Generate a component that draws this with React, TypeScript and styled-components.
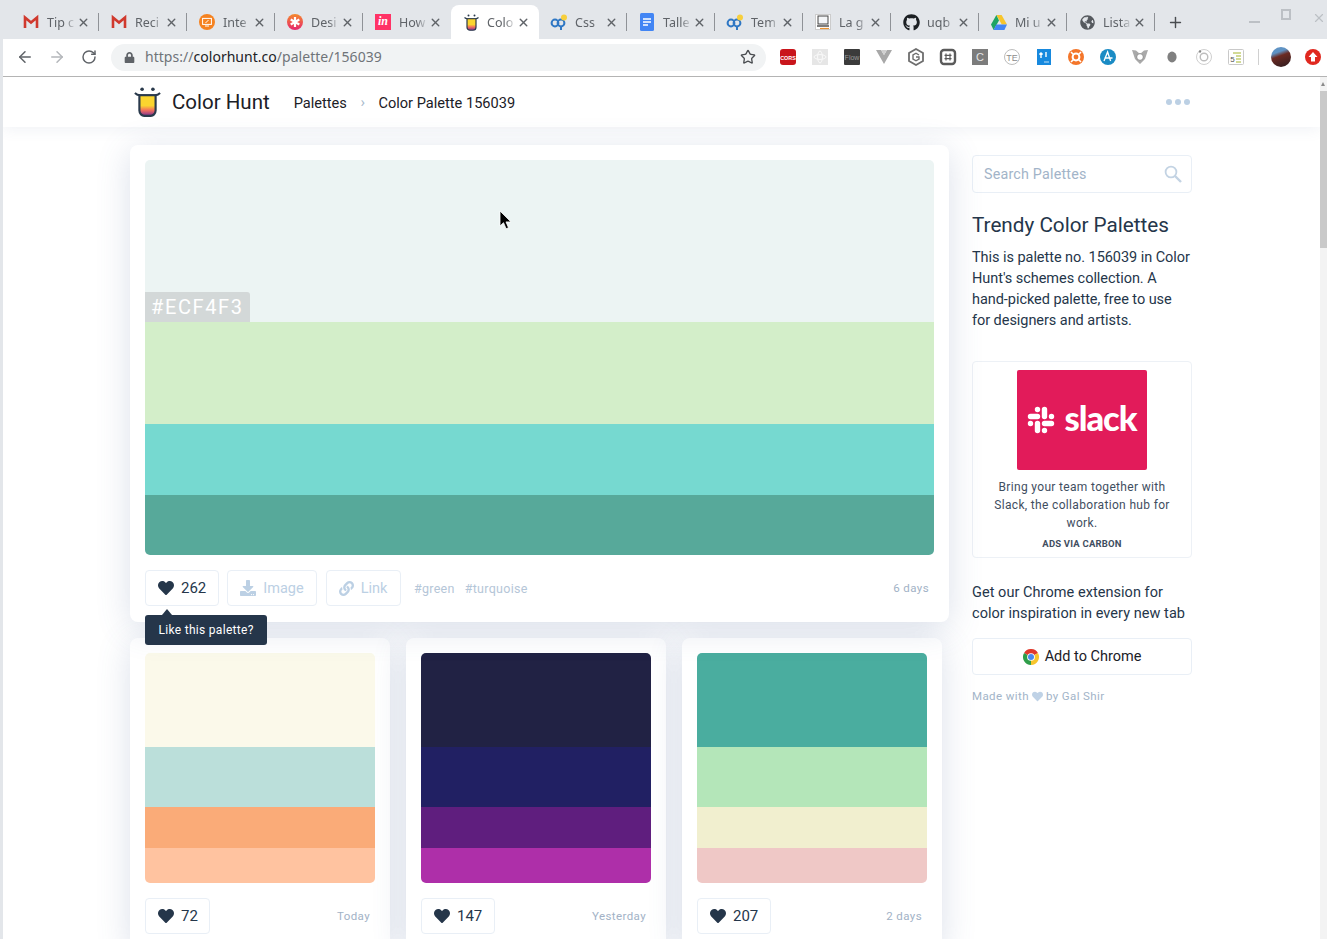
import * as React from 'react'
import styled, { createGlobalStyle } from 'styled-components'
import { ArrowLeft, ArrowRight, Plus, RotateCw, Star, X } from 'lucide-react'
import { FaDownload, FaGithub, FaGlobeAmericas, FaHeart, FaLink, FaLock } from 'react-icons/fa'

const Global = createGlobalStyle`
  html, body { margin: 0; padding: 0; height: 939px; overflow: hidden; background: #fff; }
  * { box-sizing: border-box; }
`

const uiFont = `Roboto, "Liberation Sans", sans-serif`
const chromeFont = `"Noto Sans", "Open Sans", sans-serif`

const InVision = styled.span`
  width: 16px;
  height: 16px;
  background: #ff3366;
  color: #fff;
  font: italic 700 12px/15px "Liberation Serif", serif;
  text-align: center;
`

const Logo = ({ width = 27, height = 30 }: { width?: number; height?: number }) => (
  <svg width={width} height={height} viewBox="0 0 30 33">
    <defs>
      <linearGradient id={`cup${width}`} x1="0" y1="0" x2="0" y2="1">
        <stop offset="0.5" stopColor="#fbd52f" />
        <stop offset="0.72" stopColor="#f4705c" />
        <stop offset="1" stopColor="#7c2e92" />
      </linearGradient>
    </defs>
    <circle cx="9" cy="2.4" r="2" fill="#2a3a4c" />
    <circle cx="21" cy="2.4" r="2" fill="#2a3a4c" />
    <path d="M1 6.5c2 2 4 2.5 6 2.5h16c2 0 4-.5 6-2.5" fill="none" stroke="#2a3a4c" strokeWidth="2.2" />
    <path d="M6 9h18v17a6 6 0 0 1-6 6h-6a6 6 0 0 1-6-6z" fill={`url(#cup${width})`} stroke="#2a3a4c" strokeWidth="2.4" />
  </svg>
)

const Gmail = () => (
  <svg width="16" height="16" viewBox="0 0 16 16">
    <path d="M2 14V3.5l6 5 6-5V14" fill="none" stroke="#d0392e" strokeWidth="2.6" />
  </svg>
)

const Pretzel = () => (
  <svg width="18" height="16" viewBox="0 0 18 16">
    <circle cx="5" cy="9" r="3.4" fill="none" stroke="#2f77c4" strokeWidth="2" />
    <circle cx="11" cy="9" r="3.4" fill="none" stroke="#2f77c4" strokeWidth="2" />
    <path d="M11 12v4" stroke="#2f77c4" strokeWidth="2" />
    <circle cx="14" cy="3.5" r="3" fill="#f7cf3c" />
  </svg>
)

const tabIcons: Record<string, React.ReactNode> = {
  gmail: <Gmail />,
  pretzel: <Pretzel />,
  logo: <Logo width={15} height={17} />,
  orange: (
    <svg width="16" height="16" viewBox="0 0 16 16">
      <circle cx="8" cy="8" r="8" fill="#f58220" />
      <rect x="3.6" y="4.4" width="8.8" height="6" fill="none" stroke="#fff" strokeWidth="1" />
      <path d="M6 12h4M6.5 9l3-3" stroke="#fff" strokeWidth="1" />
    </svg>
  ),
  asterisk: (
    <svg width="16" height="16" viewBox="0 0 16 16">
      <defs>
        <linearGradient id="desi" x1="0" y1="0" x2="0" y2="1">
          <stop offset="0" stopColor="#f58a2c" />
          <stop offset="1" stopColor="#e6266e" />
        </linearGradient>
      </defs>
      <circle cx="8" cy="8" r="8" fill="url(#desi)" />
      <path d="M8 3v10M3.7 5.5l8.6 5M12.3 5.5l-8.6 5" stroke="#fff" strokeWidth="2.2" />
    </svg>
  ),
  invision: <InVision>in</InVision>,
  docs: (
    <svg width="16" height="18" viewBox="0 0 16 18">
      <rect x="1" y="0" width="14" height="18" rx="1.5" fill="#4285f4" />
      <path d="M4 6h8M4 9h8M4 12h5" stroke="#fff" strokeWidth="1.6" />
    </svg>
  ),
  page: (
    <svg width="16" height="16" viewBox="0 0 16 16">
      <rect x="0.5" y="0.5" width="15" height="15" fill="#fff" stroke="#ccc" />
      <rect x="3" y="2" width="10" height="8" fill="#f3f5f7" stroke="#444" />
      <path d="M2 12h12" stroke="#444" strokeWidth="1.4" />
      <path d="M5 14.5h9" stroke="#e9912f" strokeWidth="1.2" />
    </svg>
  ),
  github: <FaGithub size={17} color="#1b1f23" />,
  drive: (
    <svg width="16" height="15" viewBox="0 0 16 15">
      <path d="M5.4 0h5.2L16 9.6h-5.2z" fill="#f7c52c" />
      <path d="M5.4 0L0 9.6 2.6 15l5.4-9.6z" fill="#1fa463" />
      <path d="M5.3 9.6H16L13.4 15H2.6z" fill="#4285f4" />
    </svg>
  ),
  globe: <FaGlobeAmericas size={15} color="#55595e" />,
}

// titles are what the narrow tabs leave readable
const tabs = [
  { icon: 'gmail', title: 'Tip c' },
  { icon: 'gmail', title: 'Reci' },
  { icon: 'orange', title: 'Inte' },
  { icon: 'asterisk', title: 'Desi' },
  { icon: 'invision', title: 'How' },
  { icon: 'logo', title: 'Colo', active: true },
  { icon: 'pretzel', title: 'Css' },
  { icon: 'docs', title: 'Talle' },
  { icon: 'pretzel', title: 'Tem' },
  { icon: 'page', title: 'La g' },
  { icon: 'github', title: 'uqb' },
  { icon: 'drive', title: 'Mi u' },
  { icon: 'globe', title: 'Lista' },
]

const Mini = ({ children }: { children: React.ReactNode }) => (
  <svg width="18" height="18" viewBox="0 0 18 18">{children}</svg>
)

const miniText = { fontFamily: '"Liberation Sans", sans-serif', textAnchor: 'middle' as const }

const extensions: React.ReactNode[] = [
  <Mini>
    <rect x="1" y="1" width="16" height="16" rx="3" fill="#c9151b" />
    <text x="9" y="11.5" fontSize="5.4" fontWeight="700" fill="#fff" style={miniText}>CORS</text>
  </Mini>,
  <Mini>
    <rect x="1" y="1" width="16" height="16" fill="#e6e6e6" />
    <ellipse cx="9" cy="9" rx="6" ry="2.4" fill="none" stroke="#fafafa" />
    <ellipse cx="9" cy="9" rx="2.4" ry="6" fill="none" stroke="#fafafa" />
  </Mini>,
  <Mini>
    <rect x="1" y="1" width="16" height="16" rx="1" fill="#3b3b3b" />
    <text x="9" y="12" fontSize="7" fill="#9a9a9a" style={miniText}>Flow</text>
  </Mini>,
  <Mini>
    <path d="M1 2h5l3 5 3-5h5L9 16z" fill="#a8a8a8" />
    <path d="M6 2l3 5 3-5" fill="#d0d0d0" />
  </Mini>,
  <Mini>
    <path d="M9 1l7 4v8l-7 4-7-4V5z" fill="none" stroke="#6e6e6e" strokeWidth="1.8" />
    <path d="M12 7L9 5.2 6 7v4l3 1.8 3-1.8V9H9" fill="none" stroke="#6e6e6e" strokeWidth="1.4" />
  </Mini>,
  <Mini>
    <rect x="2" y="2" width="14" height="14" rx="3" fill="#fff" stroke="#5a5a5a" strokeWidth="2.4" />
    <path d="M7 5.5v7M11 5.5v7M5.5 7.4h7M5.5 10.6h7" stroke="#5a5a5a" strokeWidth="1.2" />
  </Mini>,
  <Mini>
    <rect x="1" y="1" width="16" height="16" fill="#7c7c7c" />
    <text x="9" y="13" fontSize="11" fill="#e4e4e4" style={miniText}>C</text>
  </Mini>,
  <Mini>
    <circle cx="9" cy="9" r="7.5" fill="#fff" stroke="#bdbdbd" />
    <text x="9" y="12.5" fontSize="9" fill="#8c8c8c" style={miniText}>TE</text>
  </Mini>,
  <Mini>
    <rect x="2" y="1" width="14" height="16" fill="#1789de" />
    <path d="M6 10V5M4.4 6.6L6 5l1.6 1.6M11 4v5" stroke="#fff" strokeWidth="1.4" fill="none" />
    <path d="M9 14h5" stroke="#bfe0f7" />
  </Mini>,
  <Mini>
    <circle cx="9" cy="9" r="8" fill="#f4762a" />
    <circle cx="9" cy="9" r="3.4" fill="none" stroke="#fff" strokeWidth="2" />
    <path d="M4 4l3 3M14 4l-3 3M4 14l3-3M14 14l-3-3" stroke="#fff" strokeWidth="1.6" />
  </Mini>,
  <Mini>
    <circle cx="9" cy="9" r="8" fill="#1a8bc4" />
    <path d="M5 13L8.6 4l3 9M5.5 10h8" fill="none" stroke="#fff" strokeWidth="1.3" />
  </Mini>,
  <Mini>
    <path d="M1 2l4 .5L9 6l4-3.5 4-.5-3 9-5 5-5-5z" fill="#a9a9a9" />
    <circle cx="9" cy="9" r="3.4" fill="#fff" stroke="#8d8d8d" />
  </Mini>,
  <Mini>
    <ellipse cx="9" cy="9" rx="4.6" ry="5.4" fill="#808080" />
  </Mini>,
  <Mini>
    <circle cx="9" cy="9" r="7.5" fill="#fff" stroke="#cfcfcf" />
    <circle cx="9" cy="9" r="3.8" fill="none" stroke="#bdbdbd" strokeWidth="1.4" />
    <circle cx="5" cy="3.5" r="1.2" fill="#8a8a8a" />
  </Mini>,
  <Mini>
    <rect x="1.5" y="1.5" width="15" height="15" rx="1" fill="#fff" stroke="#c9c9c9" />
    <path d="M6 5h8M9 8h5M9 11h5M9 14h5" stroke="#a5b52c" />
    <text x="5.5" y="14" fontSize="8" fill="#555" style={miniText}>5</text>
  </Mini>,
]

const palettes = [
  { likes: 72, age: 'Today', colors: ['#FBF9EA', '#BBDFDA', '#FAAB78', '#FFC3A0'] },
  { likes: 147, age: 'Yesterday', colors: ['#212244', '#212063', '#5F1E7E', '#AE2FA9'] },
  { likes: 207, age: '2 days', colors: ['#4AAD9F', '#B4E6B9', '#F1EFCF', '#EFC8C6'] },
]

export default function App() {
  return (
    <>
      <Global />
      <Frame>
        <TabStrip>
          {tabs.map((t, i) => (
            <Tab key={i} $active={!!t.active} $bare={i === 4 || !!t.active}>
              <TabIcon>{tabIcons[t.icon]}</TabIcon>
              <TabTitle>{t.title}</TabTitle>
              <X size={13} strokeWidth={2.6} color="#5f6368" />
            </Tab>
          ))}
          <NewTab><Plus size={17} strokeWidth={2} color="#494c50" /></NewTab>
          <WindowControls>
            <Minimize />
            <Maximize />
            <X size={14} strokeWidth={2} color="#bcc0c5" />
          </WindowControls>
        </TabStrip>

        <Toolbar>
          <NavButton><ArrowLeft size={18} strokeWidth={2} color="#5f6368" /></NavButton>
          <NavButton><ArrowRight size={18} strokeWidth={2} color="#b4b7bb" /></NavButton>
          <NavButton><RotateCw size={16} strokeWidth={2.2} color="#5f6368" /></NavButton>
          <Omnibox>
            <FaLock size={11} color="#5f6368" />
            <Url>https://<b>colorhunt.co</b>/palette/156039</Url>
            <Star size={16} strokeWidth={2} color="#4a4d51" />
          </Omnibox>
          <Extensions>
            {extensions.map((e, i) => <ExtButton key={i}>{e}</ExtButton>)}
            <ExtDivider />
            <ExtButton>
              <Avatar />
            </ExtButton>
            <ExtButton>
              <svg width="16" height="16" viewBox="0 0 16 16">
                <circle cx="8" cy="8" r="8" fill="#e0281f" />
                <path d="M8 3l4.5 5H10v4.5H6V8H3.5z" fill="#fff" />
              </svg>
            </ExtButton>
          </Extensions>
        </Toolbar>

        <Viewport>
          <Page>
            <Nav>
              <Logo />
              <Brand>Color Hunt</Brand>
              <Crumb>Palettes</Crumb>
              <CrumbArrow>›</CrumbArrow>
              <Crumb>Color Palette 156039</Crumb>
              <Dots><i /><i /><i /></Dots>
            </Nav>

            <Content>
              <Main>
                <FeatureCard>
                  <Palette>
                    <Band $color="#ECF4F3" $height={162}>
                      <HexBadge>#ECF4F3</HexBadge>
                    </Band>
                    <Band $color="#D3EEC9" $height={102} />
                    <Band $color="#76D9D0" $height={71} />
                    <Band $color="#57A99A" $height={60} />
                  </Palette>
                  <CardFooter>
                    <LikeButton>
                      <FaHeart size={16} color="#25364a" />
                      262
                      <Tooltip>Like this palette?</Tooltip>
                    </LikeButton>
                    <GhostButton><FaDownload size={16} />Image</GhostButton>
                    <GhostButton><FaLink size={15} />Link</GhostButton>
                    <Tags>
                      <span>#green</span>
                      <span>#turquoise</span>
                    </Tags>
                    <Age>6 days</Age>
                  </CardFooter>
                </FeatureCard>

                <Grid>
                  {palettes.map(p => (
                    <SmallCard key={p.likes}>
                      <Palette>
                        <Band $color={p.colors[0]} $height={94} />
                        <Band $color={p.colors[1]} $height={60} />
                        <Band $color={p.colors[2]} $height={41} />
                        <Band $color={p.colors[3]} $height={35} />
                      </Palette>
                      <CardFooter>
                        <LikeButton>
                          <FaHeart size={16} color="#25364a" />
                          {p.likes}
                        </LikeButton>
                        <Age>{p.age}</Age>
                      </CardFooter>
                    </SmallCard>
                  ))}
                </Grid>
              </Main>

              <Sidebar>
                <SearchBox>
                  Search Palettes
                  <svg width="18" height="18" viewBox="0 0 18 18" fill="none" stroke="#c3d3e3">
                    <circle cx="7" cy="7" r="5.4" strokeWidth="1.8" />
                    <path d="M11 11l6 6" strokeWidth="2.4" />
                  </svg>
                </SearchBox>
                <Title>Trendy Color Palettes</Title>
                <Blurb>
                  This is palette no. 156039 in Color Hunt's schemes collection. A hand-picked
                  palette, free to use for designers and artists.
                </Blurb>
                <AdCard>
                  <AdImage>
                    <svg width="28" height="28" viewBox="0 0 28 28" stroke="#fff" strokeWidth="5.4" strokeLinecap="round">
                      <path d="M3.5 10.5h7M10.5 3.5v.01M17.5 3.5v7M24.5 10.5v.01M17.5 17.5h7M17.5 24.5v.01M10.5 17.5v7M3.5 17.5v.01" />
                    </svg>
                    <SlackWord>slack</SlackWord>
                  </AdImage>
                  <AdText>Bring your team together with Slack, the collaboration hub for work.</AdText>
                  <AdVia>ADS VIA CARBON</AdVia>
                </AdCard>
                <Promo>Get our Chrome extension for color inspiration in every new tab</Promo>
                <ChromeButton>
                  <svg width="16" height="16" viewBox="0 0 24 24">
                    <path d="M12 12L1.6 6A12 12 0 0 1 22.4 6z" fill="#e0392c" />
                    <path d="M12 12L1.6 6A12 12 0 0 0 12 24z" fill="#2f9e4a" />
                    <path d="M12 12v12A12 12 0 0 0 22.4 6z" fill="#f7c52c" />
                    <circle cx="12" cy="12" r="5.8" fill="#fff" />
                    <circle cx="12" cy="12" r="4.5" fill="#4a89ee" />
                  </svg>
                  Add to Chrome
                </ChromeButton>
                <Credit>
                  Made with <FaHeart size={11} color="#bfd2e6" /> by Gal Shir
                </Credit>
              </Sidebar>
            </Content>

            <Cursor width="14" height="21" viewBox="0 0 14 21">
              <path d="M1 1v15l3.5-3.3 2.6 6 2.4-1-2.5-5.8H12z" fill="#000" stroke="#fff" strokeWidth="0.8" />
            </Cursor>
          </Page>
          <ScrollTrack><ScrollThumb /></ScrollTrack>
        </Viewport>
      </Frame>
    </>
  )
}

const Frame = styled.div`
  width: 1327px;
  height: 939px;
  display: flex;
  flex-direction: column;
  overflow: hidden;
  background: #e3e6ea;
  padding-left: 3px;
`

const TabStrip = styled.div`
  height: 39px;
  flex: none;
  display: flex;
  align-items: flex-end;
  padding-left: 8px;
  font-family: ${chromeFont};
`

const Tab = styled.div<{ $active: boolean; $bare: boolean }>`
  position: relative;
  flex: 0 0 88px;
  min-width: 0;
  height: 34px;
  display: flex;
  align-items: center;
  gap: 8px;
  padding: 0 9px 0 12px;
  border-radius: 8px 8px 0 0;
  background: ${p => (p.$active ? '#fff' : 'transparent')};

  svg { flex: none; }

  &::after {
    content: '';
    display: ${p => (p.$bare ? 'none' : 'block')};
    position: absolute;
    right: 0;
    top: 8px;
    height: 18px;
    width: 1px;
    background: #8f9297;
  }
`

const TabIcon = styled.span`
  flex: 0 0 16px;
  width: 16px;
  height: 18px;
  display: flex;
  align-items: center;
  justify-content: center;
`

const TabTitle = styled.span`
  flex: 1;
  min-width: 0;
  margin-right: -7px;
  white-space: nowrap;
  font-size: 12.5px;
  color: #5f6368;
  -webkit-mask-image: linear-gradient(to right, #000 60%, transparent 100%);
  mask-image: linear-gradient(to right, #000 60%, transparent 100%);
`

const NewTab = styled.div`
  height: 34px;
  width: 24px;
  margin-left: 8px;
  display: flex;
  align-items: center;
  justify-content: center;
`

const WindowControls = styled.div`
  margin-left: auto;
  height: 39px;
  display: flex;
  align-items: center;
  gap: 21px;
  padding: 0 1px 4px 0;
`

const Minimize = styled.span`
  width: 11px;
  height: 2px;
  margin-top: 8px;
  background: #bcc0c5;
`

const Maximize = styled.span`
  width: 10px;
  height: 11px;
  margin-top: -6px;
  border: 2px solid #bcc0c5;
`

const Toolbar = styled.div`
  height: 38px;
  flex: none;
  display: flex;
  align-items: center;
  padding: 0 0 1px 6px;
  background: #fff;
  border-bottom: 1px solid #b4b4b4;
`

const NavButton = styled.div`
  flex: 0 0 32px;
  height: 28px;
  display: flex;
  align-items: center;
  justify-content: center;
`

const Omnibox = styled.div`
  flex: 0 0 655px;
  height: 27px;
  margin-left: 6px;
  display: flex;
  align-items: center;
  gap: 10px;
  padding: 0 10px 0 13px;
  border-radius: 14px;
  background: #f1f3f4;
`

const Url = styled.span`
  flex: 1;
  padding-bottom: 2px;
  font: 14px/25px ${chromeFont};
  letter-spacing: 0.03px;
  color: #6f7479;
  b { font-weight: 400; color: #202124; }
`

const Extensions = styled.div`
  margin-left: 6px;
  display: flex;
  align-items: center;
`

const ExtButton = styled.div`
  flex: 0 0 32px;
  height: 28px;
  display: flex;
  align-items: center;
  justify-content: center;
`

const ExtDivider = styled.span`
  width: 1px;
  height: 16px;
  margin: 0 6px;
  background: #d0d0d0;
`

const Avatar = styled.span`
  width: 20px;
  height: 20px;
  border-radius: 50%;
  background: linear-gradient(160deg, #5f93c4 0 28%, #6b2a22 45%, #2b1b1f 100%);
`

const Viewport = styled.div`
  flex: 1;
  min-height: 0;
  display: flex;
  background: #fff;
`

const Page = styled.div`
  position: relative;
  flex: 1;
  min-width: 0;
  overflow: hidden;
  font-family: ${uiFont};
  color: #25364a;
`

const ScrollTrack = styled.div`
  flex: 0 0 7px;
  background: #f3f3f3;
  padding-top: 14px;
  position: relative;

  &::before {
    content: '';
    position: absolute;
    top: 5px;
    left: 1px;
    border: 2.5px solid transparent;
    border-top: 0;
    border-bottom: 4px solid #8a8a8a;
  }
`

const ScrollThumb = styled.div`
  height: 157px;
  background: #c9c9c9;
`

const Nav = styled.header`
  position: relative;
  z-index: 1;
  height: 50px;
  display: flex;
  align-items: center;
  padding: 0 130px 0 131px;
  background: #fff;
  box-shadow: 0 2px 14px rgba(80, 100, 140, 0.09);
`

const Brand = styled.span`
  margin: 0 24px 0 11px;
  font-size: 20.5px;
  color: #1b2026;
`

const Crumb = styled.span`
  margin-top: 1px;
  font-size: 14.6px;
  color: #1b2026;
`

const CrumbArrow = styled.span`
  margin: 0 13.5px;
  font-size: 15px;
  color: #a9bacb;
`

const Dots = styled.div`
  margin-left: auto;
  display: flex;
  gap: 3px;
  i {
    width: 6px;
    height: 6px;
    border-radius: 50%;
    background: #bcd0e4;
  }
`

const Content = styled.div`
  display: flex;
  align-items: flex-start;
  padding: 18px 0 0 127px;
`

const Main = styled.main`
  flex: 0 0 819px;
  display: flex;
  flex-direction: column;
  gap: 16px;
`

const cardShadow = '0 6px 34px rgba(74, 100, 150, 0.2)'

const FeatureCard = styled.section`
  position: relative;
  z-index: 2;
  padding: 15px 15px 16px;
  background: #fff;
  border-radius: 8px;
  box-shadow: ${cardShadow};
`

const Grid = styled.div`
  display: grid;
  grid-template-columns: repeat(3, 260px);
  gap: 16px;
`

const SmallCard = styled.article`
  padding: 15px;
  background: #fff;
  border-radius: 8px;
  box-shadow: ${cardShadow};
`

const Palette = styled.div`
  display: flex;
  flex-direction: column;
  overflow: hidden;
  border-radius: 5px;
`

const Band = styled.div<{ $color: string; $height: number }>`
  position: relative;
  height: ${p => p.$height}px;
  background: ${p => p.$color};
`

const HexBadge = styled.span`
  position: absolute;
  left: 0;
  bottom: 0;
  height: 30px;
  padding: 0 6px;
  border-radius: 0 3px 0 0;
  background: #d3d8d8;
  color: #fff;
  font-size: 20px;
  line-height: 30px;
  letter-spacing: 1.6px;
`

const CardFooter = styled.div`
  display: flex;
  align-items: center;
  margin-top: 15px;
  height: 36px;
`

const LikeButton = styled.div`
  position: relative;
  height: 36px;
  display: flex;
  align-items: center;
  gap: 7px;
  padding: 0 11.5px 0 12px;
  background: #fff;
  border: 1px solid #e9eff6;
  border-radius: 4px;
  font-size: 15px;
  color: #25364a;
`

const GhostButton = styled(LikeButton)`
  margin-left: 8.5px;
  padding: 0 12.5px 0 12px;
  font-size: 14.5px;
  color: #bcd0e4;
`

const Tooltip = styled.div`
  position: absolute;
  z-index: 3;
  left: -1px;
  top: 44px;
  height: 30px;
  padding: 0 13.5px;
  border-radius: 3px;
  background: #25364a;
  color: #fff;
  font-size: 12px;
  line-height: 30px;
  letter-spacing: 0.3px;
  white-space: nowrap;

  &::before {
    content: '';
    position: absolute;
    left: 17px;
    top: -6px;
    border: 5px solid transparent;
    border-top: 0;
    border-bottom: 6px solid #25364a;
  }
`

const Tags = styled.div`
  display: flex;
  gap: 10px;
  margin-left: 13px;
  font-size: 12.5px;
  letter-spacing: 0.3px;
  color: #b5c6d8;
`

const Age = styled.span`
  margin-left: auto;
  padding-right: 5px;
  font-size: 11.5px;
  letter-spacing: 0.4px;
  color: #a2b2c6;
`

const Sidebar = styled.aside`
  flex: 0 0 220px;
  margin-left: 23px;
  padding-top: 10px;
`

const SearchBox = styled.div`
  height: 38px;
  display: flex;
  align-items: center;
  justify-content: space-between;
  padding: 0 9px 1px 11px;
  background: #fff;
  border: 1px solid #e9eff6;
  border-radius: 4px;
  font-size: 14.3px;
  letter-spacing: 0.2px;
  color: #a2b4c8;
`

const Title = styled.h2`
  margin: 18px 0 0;
  font-size: 20.7px;
  font-weight: 400;
  line-height: 28px;
  color: #25364a;
`

const Blurb = styled.p`
  margin: 8px 0 0;
  font-size: 14.5px;
  line-height: 21px;
  letter-spacing: -0.05px;
  color: #25364a;
`

const AdCard = styled.div`
  margin-top: 30px;
  height: 197px;
  padding: 8px 10px 0;
  display: flex;
  flex-direction: column;
  align-items: center;
  background: #fff;
  border: 1px solid #edf1f6;
  border-radius: 4px;
`

const AdImage = styled.div`
  flex: 0 0 100px;
  width: 130px;
  display: flex;
  align-items: center;
  justify-content: center;
  gap: 9px;
  border-radius: 2px;
  background: #e21b5a;
`

const SlackWord = styled.span`
  font: 900 34.5px/1 Lato, sans-serif;
  letter-spacing: -1px;
  color: #fff;
  margin-top: -4px;
`

const AdText = styled.div`
  margin-top: 8px;
  font-size: 12px;
  line-height: 18px;
  letter-spacing: 0.33px;
  text-align: center;
  color: #3f4e5f;
`

const AdVia = styled.div`
  margin-top: 6px;
  font-size: 9.5px;
  font-weight: 700;
  letter-spacing: 0.2px;
  color: #3f4e5f;
`

const Promo = styled.p`
  margin: 24px 0 0;
  font-size: 14.5px;
  line-height: 21px;
  letter-spacing: 0.05px;
  color: #25364a;
`

const ChromeButton = styled.div`
  margin-top: 14px;
  height: 37px;
  display: flex;
  align-items: center;
  justify-content: center;
  gap: 6px;
  background: #fff;
  border: 1px solid #e9eff6;
  border-radius: 4px;
  font-size: 14.5px;
  color: #1b2026;
`

const Credit = styled.div`
  margin-top: 14px;
  display: flex;
  align-items: center;
  gap: 3px;
  font-size: 11.5px;
  letter-spacing: 0.4px;
  color: #a2b4c8;
`

const Cursor = styled.svg`
  position: absolute;
  z-index: 5;
  left: 496px;
  top: 133px;
`
